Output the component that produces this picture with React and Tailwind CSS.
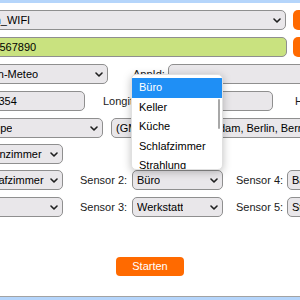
function Chevron() {
  return (
    <svg width="8" height="5" viewBox="0 0 8 5" className="shrink-0">
      <path d="M1 1 L4 4 L7 1" fill="none" stroke="#1f1f1f" strokeWidth="1.6" strokeLinecap="round" strokeLinejoin="round" />
    </svg>
  );
}

function Select({ value, className = "" }) {
  return (
    <div
      className={`flex h-[20px] shrink-0 items-center justify-between overflow-hidden rounded-[5px] border border-[#8f8f8f] bg-[#e9e7ea] pl-[4px] pr-[4px] ${className}`}
    >
      <span className="overflow-hidden whitespace-nowrap">{value}</span>
      <Chevron />
    </div>
  );
}

function Input({ value = "", className = "" }) {
  return (
    <div
      className={`flex h-[20px] shrink-0 items-center overflow-hidden whitespace-nowrap rounded-[5px] border border-[#8f8f8f] ${className}`}
    >
      {value}
    </div>
  );
}

function Label({ children, className = "" }) {
  return <span className={`shrink-0 whitespace-nowrap text-[#1a1a1a] ${className}`}>{children}</span>;
}

const rooms = ["Büro", "Keller", "Küche", "Schlafzimmer", "Strahlung", "Werkstatt"];

export default function App() {
  return (
    <div
      className="relative flex h-[300px] w-[300px] flex-col overflow-hidden bg-white text-[11px] leading-none text-black"
      style={{ fontFamily: '"Liberation Sans", Arial, sans-serif' }}
    >
      <div className="h-[3px] shrink-0 bg-[#b5d5fb]" />

      <div className="flex h-[293px] shrink-0 flex-col overflow-hidden">
        {/* WLAN */}
        <div className="mt-[7px] flex h-[20px] items-center">
          <Select value="Mein_WIFI" className="-ml-[28px] w-[314px]" />
          <div className="ml-[7px] h-[20px] w-[40px] shrink-0 rounded-[5px] bg-[#ff6a00]" />
        </div>

        {/* API key */}
        <div className="mt-[7px] flex h-[20px] items-center">
          <Input value="1234567890" className="-ml-[28px] w-[315px] bg-[#c9e27f] pl-[2px]" />
          <div className="ml-[6px] h-[20px] w-[40px] shrink-0 rounded-[5px] bg-[#ff6a00]" />
        </div>

        {/* Wetterdienst */}
        <div className="mt-[7px] flex h-[20px] items-center">
          <Select value="Open-Meteo" className="-ml-[28px] w-[136px]" />
          <Label className="ml-[25px] w-[35px]">AppId:</Label>
          <Input className="w-[160px] bg-[#e9e7ea] pl-[4px]" />
        </div>

        {/* Koordinaten */}
        <div className="mt-[7px] flex h-[20px] items-center">
          <Input value="52.5354" className="-ml-[28px] w-[113px] bg-[#e9e7ea] pl-[4px]" />
          <Label className="ml-[18px] w-[55px]">Longitude:</Label>
          <Input value="13.4050" className="w-[115px] bg-[#e9e7ea] pl-[4px]" />
          <Label className="ml-[22px]">Höhe:</Label>
        </div>

        {/* Zeitzone */}
        <div className="mt-[7px] flex h-[20px] items-center">
          <Select value="Europe" className="-ml-[28px] w-[131px]" />
          <Select
            value="(GMT+01:00) Amsterdam, Berlin, Bern, Rom, Stockholm, Wien"
            className="ml-[8px] w-[330px]"
          />
        </div>

        {/* Sensoren */}
        <div className="mt-[6px] flex h-[20px] items-center">
          <Select value="Wohnzimmer" className="-ml-[28px] w-[91px]" />
        </div>

        <div className="mt-[6px] flex h-[20px] items-center">
          <Select value="Schlafzimmer" className="-ml-[28px] w-[91px]" />
          <Label className="ml-[17px] w-[52px]">Sensor 2:</Label>
          <Select value="Büro" className="w-[91px]" />
          <Label className="ml-[13px] w-[51px]">Sensor 4:</Label>
          <Select value="Bad" className="w-[90px]" />
        </div>

        <div className="mt-[7px] flex h-[20px] items-center">
          <Select value="Flur" className="-ml-[28px] w-[91px]" />
          <Label className="ml-[17px] w-[52px]">Sensor 3:</Label>
          <Select value="Werkstatt" className="w-[91px]" />
          <Label className="ml-[13px] w-[51px]">Sensor 5:</Label>
          <Select value="Strahlung" className="w-[90px]" />
        </div>

        <div className="mt-[40px] flex justify-center">
          <button className="flex h-[19px] w-[68px] items-center justify-center rounded-[4px] bg-[#ff6a00] text-[11px] text-white">
            Starten
          </button>
        </div>
      </div>

      <div className="h-[1px] shrink-0 bg-[#a3a3a3]" />
      <div className="h-[3px] shrink-0 bg-[#b5d5fb]" />

      {/* offene Auswahlliste für Sensor 2 */}
      <div className="absolute left-[131px] top-[74px] h-[96px] w-[92px] overflow-hidden rounded-[5px] border border-[#e0e0e0] bg-white pt-[3px] shadow-[0_2px_8px_rgba(0,0,0,0.25)]">
        {rooms.map((room, i) => (
          <div
            key={room}
            className={`flex h-[19.5px] items-center pl-[7px] ${i === 0 ? "bg-[#1f8ff5] text-white" : "text-black"}`}
          >
            {room}
          </div>
        ))}
        <div className="absolute right-[2px] top-[24px] h-[30px] w-[2px] rounded-full bg-[#a8a8a8]" />
      </div>
    </div>
  );
}
